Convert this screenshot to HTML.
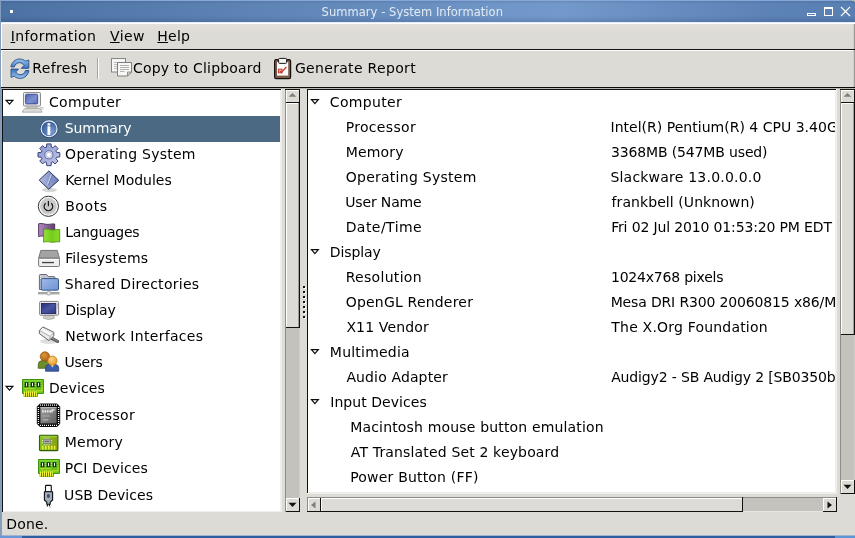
<!DOCTYPE html>
<html><head><meta charset="utf-8"><title>Summary - System Information</title>
<style>
html,body{margin:0;padding:0;}
body{width:855px;height:538px;position:relative;overflow:hidden;background:#dddbd6;font-family:"DejaVu Sans","Liberation Sans",sans-serif;font-size:14px;color:#000;}
#w{position:absolute;left:0;top:0;width:855px;height:538px;overflow:hidden;will-change:transform;}
.a{position:absolute;}
.t{position:absolute;white-space:nowrap;line-height:17px;height:17px;}
#title{left:0;top:0;width:855px;height:22px;background:linear-gradient(180deg,rgba(20,40,80,.16) 0,rgba(20,40,80,0) 4px,rgba(20,40,80,0) 16px,rgba(20,40,80,.17) 22px),linear-gradient(90deg,#4c71a3 0%,#557aac 15%,#5e84b6 30%,#678dbf 45%,#7096c7 58%,#7399ca 66%,#678dc0 78%,#5c82b6 90%,#5980b3 100%);}
.tree{background:#fff;overflow:hidden;}
.sel{background:#4b6983;}
svg{position:absolute;overflow:visible;}
u{text-decoration:underline;text-decoration-thickness:1px;text-underline-offset:0.5px;}
</style></head><body><div id="w">
<div id="title" class="a"><div class="a" style="left:0;top:0;width:855px;height:1px;background:#86a8d6"></div></div>
<div class="t" style="left:321.54px;top:4.3px;letter-spacing:0.047px;color:#e2eaf4;font-size:11.5px;">Summary - System Information</div>
<div class="a" style="left:10px;top:10px;width:3px;height:3px;background:#fff;"></div>
<svg style="left:800px;top:0" width="55" height="23" viewBox="800 0 55 23">
<rect x="807.5" y="13.5" width="8" height="2" fill="none" stroke="#fff" stroke-width="1"/>
<rect x="824.5" y="7.5" width="8" height="8" fill="none" stroke="#fff" stroke-width="1"/><rect x="824" y="7" width="9" height="2" fill="#fff"/>
<path d="M841 7 L850 16 M850 7 L841 16" stroke="#fff" stroke-width="1.1" fill="none"/>
</svg>
<div class="a" style="left:1px;top:22px;width:854px;height:1px;background:#e6edf6;"></div>
<div class="a" style="left:1px;top:23px;width:854px;height:1px;background:#fff;"></div>
<div class="a" style="left:1px;top:24px;width:854px;height:25px;background:#dddbd6;background:linear-gradient(180deg,#e4e0da 0,#dddbd6 9px);"></div>
<div class="t" style="left:10.63px;top:28px;letter-spacing:0.432px;"><u>I</u>nformation</div>
<div class="t" style="left:109.99px;top:28px;letter-spacing:0.388px;"><u>V</u>iew</div>
<div class="t" style="left:157.33px;top:28px;letter-spacing:0.206px;"><u>H</u>elp</div>
<div class="a" style="left:1px;top:49px;width:854px;height:1px;background:#111;"></div>
<div class="a" style="left:1px;top:50px;width:854px;height:1px;background:#fff;"></div>
<div class="a" style="left:1px;top:51px;width:854px;height:36px;background:#dddbd6;"></div>
<div class="a" style="left:1px;top:24px;width:1px;height:63px;background:#fff;"></div>
<div class="t" style="left:32.23px;top:60px;letter-spacing:0.348px;">Refresh</div>
<div class="a" style="left:97px;top:58px;width:1px;height:21px;background:#a5a39e;"></div>
<div class="a" style="left:98px;top:58px;width:1px;height:21px;background:#fff;"></div>
<div class="t" style="left:132.91px;top:60px;letter-spacing:0.201px;">Copy to Clipboard</div>
<div class="t" style="left:294.91px;top:60px;letter-spacing:0.319px;">Generate Report</div>
<div class="a" style="left:853px;top:24px;width:1px;height:63px;background:#d0cec9;"></div>
<div class="a" style="left:854px;top:24px;width:1px;height:63px;background:#9c9a95;"></div>
<div class="a" style="left:1px;top:49px;width:854px;height:1px;background:#111;"></div>
<div class="a" style="left:1px;top:87px;width:854px;height:1px;background:#0a0a0a;"></div>
<div class="a" style="left:2px;top:88px;width:853px;height:1px;background:#b9b7b2;"></div>
<div class="a" style="left:2px;top:89px;width:280px;height:423px;background:#fff;"></div>
<div class="a" style="left:2px;top:89px;width:279px;height:1px;background:#111;"></div>
<div class="a" style="left:2px;top:89px;width:1px;height:423px;background:#111;"></div>
<div class="a" style="left:280px;top:90px;width:2px;height:422px;background:#efeeeb;"></div>
<div class="a" style="left:3px;top:511px;width:279px;height:1px;background:#efeeeb;"></div>
<div class="a tree" style="left:3px;top:90px;width:277px;height:421px;">
<div class="a sel" style="left:0;top:26px;width:277px;height:26px"></div>
<div class="t" style="left:46.01px;top:4px;letter-spacing:0.325px;">Computer</div>
<div class="t" style="left:61.78px;top:30px;letter-spacing:-0.136px;color:#fff;">Summary</div>
<div class="t" style="left:62.11px;top:56px;letter-spacing:0.248px;">Operating System</div>
<div class="t" style="left:62.13px;top:82px;letter-spacing:0.001px;">Kernel Modules</div>
<div class="t" style="left:62.13px;top:108px;letter-spacing:0.607px;">Boots</div>
<div class="t" style="left:62.23px;top:134px;letter-spacing:-0.242px;">Languages</div>
<div class="t" style="left:62.13px;top:160px;letter-spacing:0.161px;">Filesystems</div>
<div class="t" style="left:61.78px;top:186px;letter-spacing:0.266px;">Shared Directories</div>
<div class="t" style="left:62.13px;top:212px;letter-spacing:-0.170px;">Display</div>
<div class="t" style="left:62.13px;top:238px;letter-spacing:0.292px;">Network Interfaces</div>
<div class="t" style="left:61.48px;top:264px;letter-spacing:-0.205px;">Users</div>
<div class="t" style="left:45.93px;top:290px;letter-spacing:0.128px;">Devices</div>
<div class="t" style="left:61.83px;top:317px;letter-spacing:0.305px;">Processor</div>
<div class="t" style="left:61.83px;top:344px;letter-spacing:0.191px;">Memory</div>
<div class="t" style="left:61.83px;top:370px;letter-spacing:0.097px;">PCI Devices</div>
<div class="t" style="left:61.08px;top:397px;letter-spacing:0.053px;">USB Devices</div>
</div>
<div class="a" style="left:285px;top:89px;width:15px;height:423px;background:#c4c2bc;"></div>
<div class="a" style="left:285px;top:89px;width:1px;height:423px;background:#8f8d88;"></div>
<div class="a" style="left:285px;top:89px;width:15px;height:1px;background:#111;"></div>
<div class="a" style="left:299px;top:89px;width:1px;height:423px;background:#111;"></div>
<div class="a" style="left:286px;top:90px;width:13px;height:12px;background:#dddbd6;"></div>
<div class="a" style="left:286px;top:90px;width:13px;height:1px;background:#fff;"></div>
<div class="a" style="left:286px;top:90px;width:1px;height:12px;background:#fff;"></div>
<div class="a" style="left:286px;top:102px;width:14px;height:1px;background:#111;"></div>
<div class="a" style="left:286px;top:103px;width:13px;height:224px;background:#dddbd6;"></div>
<div class="a" style="left:286px;top:103px;width:1px;height:224px;background:#fff;"></div>
<div class="a" style="left:286px;top:103px;width:13px;height:1px;background:#fff;"></div>
<div class="a" style="left:286px;top:327px;width:14px;height:1px;background:#111;"></div>
<div class="a" style="left:298px;top:103px;width:1px;height:224px;background:#a09e99;"></div>
<div class="a" style="left:299px;top:328px;width:1px;height:184px;background:#d0cec8;"></div>
<div class="a" style="left:286px;top:498px;width:13px;height:13px;background:#dddbd6;"></div>
<div class="a" style="left:286px;top:498px;width:13px;height:1px;background:#fff;"></div>
<div class="a" style="left:286px;top:498px;width:1px;height:13px;background:#fff;"></div>
<div class="a" style="left:299px;top:498px;width:1px;height:14px;background:#111;"></div>
<div class="a" style="left:286px;top:511px;width:14px;height:1px;background:#111;"></div>
<svg style="left:0;top:0" width="855" height="538"><path d="M292.5 507 l4 -4.2 l-8 0z" fill="#111"/><path d="M292.5 93 l3.8 3.8 l-7.6 0z" fill="#807e7a"/></svg>
<div class="a" style="left:840px;top:89px;width:15px;height:405px;background:#c4c2bc;"></div>
<div class="a" style="left:840px;top:89px;width:1px;height:405px;background:#8f8d88;"></div>
<div class="a" style="left:840px;top:89px;width:15px;height:1px;background:#111;"></div>
<div class="a" style="left:854px;top:89px;width:1px;height:405px;background:#111;"></div>
<div class="a" style="left:841px;top:90px;width:13px;height:12px;background:#dddbd6;"></div>
<div class="a" style="left:841px;top:90px;width:13px;height:1px;background:#fff;"></div>
<div class="a" style="left:841px;top:90px;width:1px;height:12px;background:#fff;"></div>
<div class="a" style="left:841px;top:102px;width:14px;height:1px;background:#111;"></div>
<div class="a" style="left:841px;top:103px;width:13px;height:231px;background:#dddbd6;"></div>
<div class="a" style="left:841px;top:103px;width:1px;height:231px;background:#fff;"></div>
<div class="a" style="left:841px;top:103px;width:13px;height:1px;background:#fff;"></div>
<div class="a" style="left:841px;top:334px;width:14px;height:1px;background:#111;"></div>
<div class="a" style="left:853px;top:103px;width:1px;height:231px;background:#a09e99;"></div>
<div class="a" style="left:854px;top:335px;width:1px;height:159px;background:#d0cec8;"></div>
<div class="a" style="left:841px;top:480px;width:13px;height:13px;background:#dddbd6;"></div>
<div class="a" style="left:841px;top:480px;width:13px;height:1px;background:#fff;"></div>
<div class="a" style="left:841px;top:480px;width:1px;height:13px;background:#fff;"></div>
<div class="a" style="left:854px;top:480px;width:1px;height:14px;background:#111;"></div>
<div class="a" style="left:841px;top:493px;width:14px;height:1px;background:#111;"></div>
<svg style="left:0;top:0" width="855" height="538"><path d="M847.5 489 l4 -4.2 l-8 0z" fill="#111"/><path d="M847.5 93 l3.8 3.8 l-7.6 0z" fill="#807e7a"/></svg>
<div class="a" style="left:304px;top:287px;width:2px;height:2px;background:#fff;"></div>
<div class="a" style="left:303px;top:286px;width:2px;height:2px;background:#111;"></div>
<div class="a" style="left:304px;top:292px;width:2px;height:2px;background:#fff;"></div>
<div class="a" style="left:303px;top:291px;width:2px;height:2px;background:#111;"></div>
<div class="a" style="left:304px;top:297px;width:2px;height:2px;background:#fff;"></div>
<div class="a" style="left:303px;top:296px;width:2px;height:2px;background:#111;"></div>
<div class="a" style="left:304px;top:302px;width:2px;height:2px;background:#fff;"></div>
<div class="a" style="left:303px;top:301px;width:2px;height:2px;background:#111;"></div>
<div class="a" style="left:304px;top:307px;width:2px;height:2px;background:#fff;"></div>
<div class="a" style="left:303px;top:306px;width:2px;height:2px;background:#111;"></div>
<div class="a" style="left:304px;top:312px;width:2px;height:2px;background:#fff;"></div>
<div class="a" style="left:303px;top:311px;width:2px;height:2px;background:#111;"></div>
<div class="a" style="left:304px;top:317px;width:2px;height:2px;background:#fff;"></div>
<div class="a" style="left:303px;top:316px;width:2px;height:2px;background:#111;"></div>
<div class="a" style="left:307px;top:89px;width:530px;height:405px;background:#fff;"></div>
<div class="a" style="left:307px;top:89px;width:529px;height:1px;background:#111;"></div>
<div class="a" style="left:307px;top:89px;width:1px;height:404px;background:#111;"></div>
<div class="a" style="left:835px;top:90px;width:2px;height:404px;background:#efeeeb;"></div>
<div class="a" style="left:308px;top:492px;width:529px;height:2px;background:#efeeeb;"></div>
<div class="a tree" style="left:308px;top:90px;width:527px;height:402px;">
<div class="t" style="left:21.81px;top:4px;letter-spacing:0.325px;">Computer</div>
<div class="t" style="left:37.63px;top:29px;letter-spacing:0.330px;">Processor</div>
<div class="t" style="left:302.53px;top:29px;letter-spacing:0.015px;">Intel(R) Pentium(R) 4 CPU 3.40GHz</div>
<div class="t" style="left:37.63px;top:54px;letter-spacing:0.191px;">Memory</div>
<div class="t" style="left:302.93px;top:54px;letter-spacing:-0.142px;">3368MB (547MB used)</div>
<div class="t" style="left:37.71px;top:79px;letter-spacing:0.261px;">Operating System</div>
<div class="t" style="left:302.38px;top:79px;letter-spacing:0.216px;">Slackware 13.0.0.0.0</div>
<div class="t" style="left:37.28px;top:104px;letter-spacing:-0.151px;">User Name</div>
<div class="t" style="left:303.58px;top:104px;letter-spacing:0.074px;">frankbell (Unknown)</div>
<div class="t" style="left:37.63px;top:129px;letter-spacing:0.458px;">Date/Time</div>
<div class="t" style="left:303.13px;top:129px;letter-spacing:-0.149px;">Fri 02 Jul 2010 01:53:20 PM EDT</div>
<div class="t" style="left:21.83px;top:154px;letter-spacing:-0.120px;">Display</div>
<div class="t" style="left:37.63px;top:179px;letter-spacing:0.312px;">Resolution</div>
<div class="t" style="left:302.96px;top:179px;letter-spacing:-0.207px;">1024x768 pixels</div>
<div class="t" style="left:37.71px;top:204px;letter-spacing:0.199px;">OpenGL Renderer</div>
<div class="t" style="left:302.63px;top:204px;letter-spacing:-0.148px;">Mesa DRI R300 20060815 x86/MMX/SSE2 TCL</div>
<div class="t" style="left:38.38px;top:229px;letter-spacing:0.152px;">X11 Vendor</div>
<div class="t" style="left:303.34px;top:229px;letter-spacing:0.195px;">The X.Org Foundation</div>
<div class="t" style="left:21.83px;top:254px;letter-spacing:0.224px;">Multimedia</div>
<div class="t" style="left:38.39px;top:279px;letter-spacing:0.134px;">Audio Adapter</div>
<div class="t" style="left:303.19px;top:279px;letter-spacing:-0.152px;">Audigy2 - SB Audigy 2 [SB0350b]</div>
<div class="t" style="left:22.23px;top:304px;letter-spacing:0.049px;">Input Devices</div>
<div class="t" style="left:42.23px;top:329px;letter-spacing:0.168px;">Macintosh mouse button emulation</div>
<div class="t" style="left:42.79px;top:354px;letter-spacing:0.157px;">AT Translated Set 2 keyboard</div>
<div class="t" style="left:42.23px;top:379px;letter-spacing:0.189px;">Power Button (FF)</div>
</div>
<div class="a" style="left:307px;top:497px;width:530px;height:15px;background:#c4c2bc;"></div>
<div class="a" style="left:307px;top:497px;width:530px;height:1px;background:#8f8d88;"></div>
<div class="a" style="left:307px;top:497px;width:1px;height:15px;background:#8f8d88;"></div>
<div class="a" style="left:307px;top:511px;width:530px;height:1px;background:#111;"></div>
<div class="a" style="left:308px;top:498px;width:12px;height:13px;background:#dddbd6;"></div>
<div class="a" style="left:308px;top:498px;width:12px;height:1px;background:#fff;"></div>
<div class="a" style="left:308px;top:498px;width:1px;height:13px;background:#fff;"></div>
<div class="a" style="left:320px;top:498px;width:1px;height:14px;background:#111;"></div>
<div class="a" style="left:321px;top:498px;width:421px;height:13px;background:#dddbd6;"></div>
<div class="a" style="left:321px;top:498px;width:421px;height:1px;background:#fff;"></div>
<div class="a" style="left:321px;top:498px;width:1px;height:13px;background:#fff;"></div>
<div class="a" style="left:742px;top:497px;width:1px;height:15px;background:#111;"></div>
<div class="a" style="left:743px;top:511px;width:80px;height:1px;background:#e8e6e2;"></div>
<div class="a" style="left:823px;top:498px;width:13px;height:13px;background:#dddbd6;"></div>
<div class="a" style="left:823px;top:498px;width:13px;height:1px;background:#fff;"></div>
<div class="a" style="left:823px;top:498px;width:1px;height:13px;background:#fff;"></div>
<div class="a" style="left:836px;top:497px;width:1px;height:15px;background:#111;"></div>
<div class="a" style="left:823px;top:511px;width:14px;height:1px;background:#111;"></div>
<svg style="left:0;top:0" width="855" height="538"><path d="M311 505 l4.5 -3.5 l0 7z" fill="#807e7a"/><path d="M832 505 l-4.5 -3.5 l0 7z" fill="#111"/></svg>
<svg style="left:0;top:0" width="855" height="538"><path d="M6.1 100.3 h6.8 l-3.4 3.9z" fill="#fff" stroke="#0c0c0c" stroke-width="1.2" stroke-linejoin="miter"/></svg>
<svg style="left:0;top:0" width="855" height="538"><path d="M6.1 386.3 h6.8 l-3.4 3.9z" fill="#fff" stroke="#0c0c0c" stroke-width="1.2" stroke-linejoin="miter"/></svg>
<svg style="left:0;top:0" width="855" height="538"><path d="M311.5 99.7 h6.8 l-3.4 3.9z" fill="#fff" stroke="#0c0c0c" stroke-width="1.2" stroke-linejoin="miter"/></svg>
<svg style="left:0;top:0" width="855" height="538"><path d="M311.5 249.7 h6.8 l-3.4 3.9z" fill="#fff" stroke="#0c0c0c" stroke-width="1.2" stroke-linejoin="miter"/></svg>
<svg style="left:0;top:0" width="855" height="538"><path d="M311.5 349.7 h6.8 l-3.4 3.9z" fill="#fff" stroke="#0c0c0c" stroke-width="1.2" stroke-linejoin="miter"/></svg>
<svg style="left:0;top:0" width="855" height="538"><path d="M311.5 399.7 h6.8 l-3.4 3.9z" fill="#fff" stroke="#0c0c0c" stroke-width="1.2" stroke-linejoin="miter"/></svg>
<div class="t" style="left:6.23px;top:516px;letter-spacing:0.172px;">Done.</div>
<div class="a" style="left:0px;top:535px;width:855px;height:1px;background:#a3b4cc;"></div>
<div class="a" style="left:0px;top:536px;width:855px;height:2px;background:#2e5e9f;"></div>
<div class="a" style="left:0px;top:536px;width:22px;height:2px;background:#6797d6;"></div>
<div class="a" style="left:835px;top:536px;width:20px;height:2px;background:#5c96d6;"></div>
<div class="a" style="left:0px;top:0px;width:2px;height:1px;background:#a4ab98;"></div>
<div class="a" style="left:0px;top:1px;width:1px;height:1px;background:#97a5a6;"></div>
<div class="a" style="left:852px;top:0px;width:3px;height:1px;background:#b4c4a4;"></div>
<div class="a" style="left:854px;top:1px;width:1px;height:1px;background:#9fb8c0;"></div>
<div class="a" style="left:0px;top:0px;width:1px;height:536px;background:#869cbc;"></div>
<div class="a" style="left:1px;top:88px;width:1px;height:448px;background:#8e9fb6;"></div>
<svg style="left:0;top:0" width="855" height="538" viewBox="0 0 855 538">
<defs>
<linearGradient id="gRef" x1="0" y1="0" x2="0" y2="1"><stop offset="0" stop-color="#9cc6f0"/><stop offset="1" stop-color="#3b73bb"/></linearGradient>
<linearGradient id="gScr" x1="0" y1="0" x2="1" y2="1"><stop offset="0" stop-color="#4f63ad"/><stop offset="0.55" stop-color="#7d90d2"/><stop offset="1" stop-color="#5a6db8"/></linearGradient>
<radialGradient id="gInfo" cx="0.65" cy="0.7" r="0.8"><stop offset="0" stop-color="#7d9dd2"/><stop offset="1" stop-color="#2e528f"/></radialGradient>
<linearGradient id="gGear" x1="0" y1="0" x2="1" y2="1"><stop offset="0" stop-color="#8896cc"/><stop offset="1" stop-color="#c6c8ea"/></linearGradient>
<linearGradient id="gDia" x1="0" y1="0" x2="1" y2="0"><stop offset="0" stop-color="#b4bee2"/><stop offset="1" stop-color="#6a7cbc"/></linearGradient>
<linearGradient id="gPur" x1="0" y1="0" x2="1" y2="0"><stop offset="0" stop-color="#b58bc2"/><stop offset="1" stop-color="#5e3d6e"/></linearGradient>
<linearGradient id="gGrn" x1="0" y1="0" x2="1" y2="0"><stop offset="0" stop-color="#96e040"/><stop offset="0.5" stop-color="#74cc18"/><stop offset="1" stop-color="#8ada30"/></linearGradient>
<linearGradient id="gFold" x1="0" y1="0" x2="1" y2="1"><stop offset="0" stop-color="#9ebaea"/><stop offset="1" stop-color="#6f92d4"/></linearGradient>
<linearGradient id="gDisp" x1="0" y1="0" x2="1" y2="1"><stop offset="0" stop-color="#232c78"/><stop offset="0.5" stop-color="#4a55a0"/><stop offset="1" stop-color="#2c3684"/></linearGradient>
<radialGradient id="gH1" cx="0.4" cy="0.35" r="0.7"><stop offset="0" stop-color="#e0963a"/><stop offset="1" stop-color="#a8600e"/></radialGradient>
<radialGradient id="gH2" cx="0.4" cy="0.35" r="0.7"><stop offset="0" stop-color="#fad28a"/><stop offset="1" stop-color="#e8961e"/></radialGradient>
<linearGradient id="gChip" x1="0" y1="0" x2="1" y2="1"><stop offset="0" stop-color="#a4a4a4"/><stop offset="1" stop-color="#5e5e5e"/></linearGradient>
<linearGradient id="gMem" x1="0" y1="0" x2="1" y2="0"><stop offset="0" stop-color="#86c424"/><stop offset="1" stop-color="#8a9e18"/></linearGradient>
<g id="card">
<path d="M0.5 0.5 h21 v14 h-6.2 v3 h-13 v-3 h-1.8z" fill="#66c41c" stroke="#3a960a" stroke-width="1"/>
<rect x="1.4" y="1.4" width="19.2" height="1" fill="#92e04a"/>
<rect x="2.6" y="3.2" width="3.8" height="5" fill="#14301a"/><rect x="8.6" y="3.2" width="3.8" height="5" fill="#14301a"/><rect x="14.6" y="3.2" width="3.8" height="5" fill="#14301a"/>
<rect x="4" y="4" width="1" height="3.2" fill="#eef4ee"/><rect x="10" y="4" width="1" height="3.2" fill="#eef4ee"/><rect x="16" y="4" width="1" height="3.2" fill="#eef4ee"/>
<path d="M6.8 4.5 h1.4 M6.8 6.5 h1.4 M12.8 4.5 h1.4 M12.8 6.5 h1.4 M1.6 4.5 h0.8 M1.6 6.5 h0.8 M18.6 4.5 h1 M18.6 6.5 h1" stroke="#d8e4a0" stroke-width="0.7"/>
<path d="M2.6 9.4 h10 M2.6 9.6 l2.8 2.4 M5.4 11.9 h14.8 v-4.2" stroke="#cfe024" stroke-width="0.9" fill="none"/>
<rect x="1.8" y="14" width="13" height="3.6" fill="#6e7a0c"/>
<path d="M2.5 12.4 v5.2 M4.5 12.4 v5.2 M6.5 12.4 v5.2 M8.5 12.4 v5.2 M10.5 12.4 v5.2 M12.5 12.4 v5.2 M14.3 12.4 v5.2" stroke="#f4f43c" stroke-width="1"/>
</g>
</defs>
<!-- refresh -->
<g transform="translate(10,58.3)">
<path id="rf" d="M0.9 8.6 C1.5 4.4 5 0.7 9.6 0.7 C12 0.7 13.9 1.5 15.4 2.8 L18.8 1.8 L18.8 10 L11.3 10 L14 7.2 C13 5.5 11.5 4.4 9.6 4.4 C7 4.4 5.1 6 4.3 8.6 Z" fill="url(#gRef)" stroke="#244c86" stroke-width="0.9" stroke-linejoin="round"/>
<use href="#rf" transform="rotate(180 9.9 10.4)"/>
</g>
<!-- copy -->
<g>
<rect x="111.5" y="58.5" width="14" height="13.5" fill="#f6f6f5" stroke="#868684" stroke-width="1"/>
<path d="M114 62.5 h8 M114 64.5 h9 M114 66.5 h8 M114 68.5 h5" stroke="#b5b5b3" stroke-width="0.9"/>
<path d="M117.5 62.5 h14 v9.5 l-4 4 h-10z" fill="#f7f7f6" stroke="#7e7e7c" stroke-width="1"/>
<path d="M131.5 72 h-4 v4z" fill="#d0d0ce" stroke="#7e7e7c" stroke-width="0.8"/>
<path d="M120 65.5 h9 M120 67.5 h9 M120 69.5 h9 M120 71.5 h4.5" stroke="#a9a9a7" stroke-width="0.9"/>
</g>
<!-- clipboard -->
<g>
<rect x="274.6" y="59.6" width="16" height="19" rx="1.6" fill="#7b5a47" stroke="#141210" stroke-width="1.2"/>
<rect x="277" y="62" width="11.2" height="13.6" fill="#fbfbfa"/>
<rect x="278.6" y="58.4" width="8" height="5" rx="1" fill="#f4f4f2" stroke="#1a1a18" stroke-width="1"/>
<rect x="278.4" y="69.2" width="3.6" height="3.6" fill="#f2dcd8" stroke="#c23a2c" stroke-width="1"/>
<path d="M279.6 70.6 l1.6 2 l5.2 -5.6" stroke="#cc3426" stroke-width="1.3" fill="none"/>
</g>
<!-- computer -->
<g>
<rect x="23.5" y="92.5" width="17" height="13.6" rx="1" fill="#e9e9ef" stroke="#8c8c8c" stroke-width="1"/>
<rect x="25.6" y="94.3" width="12" height="9.6" rx="1" fill="url(#gScr)" stroke="#39488a" stroke-width="0.9"/>
<rect x="27" y="106.2" width="10" height="1.8" fill="#d4d4cf" stroke="#9a9a96" stroke-width="0.5"/>
<path d="M25 108.3 h14.5 l2.6 3.8 h-19.8z" fill="#efefec" stroke="#9c9c98" stroke-width="0.9"/>
<path d="M25.5 109.6 h13.6 M24.6 110.8 h15.4" stroke="#c4c4c0" stroke-width="0.6"/>
<ellipse cx="41.5" cy="108.3" rx="1.7" ry="1.1" fill="#e4e4e0" stroke="#a2a29e" stroke-width="0.5"/>
</g>
<!-- info -->
<g>
<circle cx="49.1" cy="128.8" r="9.3" fill="#2f4f80"/>
<circle cx="49.1" cy="128.8" r="8.5" fill="#f4f7fb"/>
<circle cx="49.1" cy="128.8" r="7.4" fill="url(#gInfo)"/>
<rect x="47.5" y="123.2" width="2.8" height="2.3" fill="#fff"/>
<rect x="47.5" y="126.3" width="2.8" height="8.7" fill="#fff"/>
</g>
<!-- gear -->
<g transform="translate(48.9,154.8)">
<path id="gear" d="" />
<g fill="url(#gGear)" stroke="#35437c" stroke-width="1" stroke-linejoin="round">
<path d="M-2.1 -10.9 L2.1 -10.9 L2.5 -7.6 L4.0 -7.0 L6.2 -9.2 L9.2 -6.2 L7.0 -4.0 L7.6 -2.5 L10.9 -2.1 L10.9 2.1 L7.6 2.5 L7.0 4.0 L9.2 6.2 L6.2 9.2 L4.0 7.0 L2.5 7.6 L2.1 10.9 L-2.1 10.9 L-2.5 7.6 L-4.0 7.0 L-6.2 9.2 L-9.2 6.2 L-7.0 4.0 L-7.6 2.5 L-10.9 2.1 L-10.9 -2.1 L-7.6 -2.5 L-7.0 -4.0 L-9.2 -6.2 L-6.2 -9.2 L-4.0 -7.0 L-2.5 -7.6 Z"/>
</g>
<circle r="4.1" fill="#e3e4f3" stroke="#56629c" stroke-width="0.9"/>
<circle r="2.5" fill="#fff" stroke="#8a92bc" stroke-width="0.5"/>
</g>
<!-- kernel -->
<g>
<ellipse cx="49.5" cy="190" rx="7.5" ry="2.2" fill="#000" opacity="0.16"/>
<path d="M39.2 180.2 L48.8 171 L58.7 180.2 L48.8 189.3 Z" fill="url(#gDia)" stroke="#2b3152" stroke-width="1" stroke-linejoin="round"/>
<path d="M51.5 174.5 L47.5 184.5" stroke="#eef0fa" stroke-width="0.9" opacity="0.8"/>
<path d="M52.5 175 L48.5 185" stroke="#5a6698" stroke-width="0.8" opacity="0.7"/>
</g>
<!-- boots -->
<g>
<circle cx="48.4" cy="206.3" r="10.1" fill="#f6f6f6" stroke="#333" stroke-width="1"/>
<circle cx="48.4" cy="206.3" r="8.3" fill="#c9c9c9"/>
<path d="M45.6 203.2 A4.3 4.3 0 1 0 51.2 203.2" fill="none" stroke="#161616" stroke-width="1.2"/>
<path d="M48.4 201 V206.2" stroke="#161616" stroke-width="1.2"/>
</g>
<!-- languages -->
<g>
<path d="M38.6 223.8 C42 222.6 45 224.6 48 224.4 C50.5 224.3 52.5 223.6 54.7 224 L54.7 236.4 C52 235.6 50 236.8 47 236.6 C44 236.4 41.5 235.4 38.6 236.6 Z" fill="url(#gPur)" stroke="#4a2d58" stroke-width="0.9"/>
<path d="M43.6 229.4 C47 228.2 50 230.2 53 230 C55.5 229.9 57.5 229.2 59.7 229.6 L59.7 242 C57 241.2 55 242.4 52 242.2 C49 242 46.5 241 43.6 242.2 Z" fill="url(#gGrn)" stroke="#4f9410" stroke-width="0.9"/>
</g>
<!-- filesystems -->
<g>
<path d="M40.8 250.4 H57.3 L59.5 258.4 H38.6 Z" fill="#a3a3a3" stroke="#6c6c6c" stroke-width="0.9" stroke-linejoin="round"/>
<rect x="38.6" y="258.2" width="20.9" height="8.3" rx="1.2" fill="#eeeeee" stroke="#6a6a6a" stroke-width="0.9"/>
<rect x="39.6" y="259.1" width="18.9" height="1" fill="#fff"/>
<rect x="42" y="261.9" width="12" height="1.3" fill="#444"/>
</g>
<!-- shared folder -->
<g>
<path d="M39.4 289.5 V275.4 Q39.4 274.5 40.3 274.5 H46.5 L48.3 276.6 H54.2 Q54.9 276.6 54.9 277.4 V289.5 Z" fill="#c3c7cc" stroke="#55606c" stroke-width="0.9"/>
<path d="M40.6 276 V289" stroke="#f0f2f4" stroke-width="0.8" stroke-dasharray="1 1"/>
<rect x="41.2" y="278.6" width="17.3" height="11.6" rx="1" fill="url(#gFold)" stroke="#2c4c7e" stroke-width="0.9"/>
<path d="M38 293 H59.5" stroke="#666" stroke-width="1.2"/>
<path d="M38 294.2 H59.5" stroke="#bbb" stroke-width="0.8"/>
<circle cx="48.9" cy="293.2" r="2" fill="#e2e2e2" stroke="#8a8a8a" stroke-width="0.6"/>
</g>
<!-- display -->
<g>
<path d="M44.2 315.5 H53.8 L54.6 318.2 Q49 321 43.4 318.2 Z" fill="#cfcfc8" stroke="#9a9a94" stroke-width="0.6"/>
<rect x="39.6" y="301.4" width="19" height="13.8" rx="1.2" fill="#e9e9f1" stroke="#787878" stroke-width="0.9"/>
<rect x="41.4" y="303.4" width="14.4" height="10.2" fill="url(#gDisp)" stroke="#1b2152" stroke-width="0.8"/>
<path d="M56.8 304.5 h1.2 M56.8 306.3 h1.2 M56.8 308.1 h1.2" stroke="#9ea0a8" stroke-width="0.7"/>
</g>
<!-- network -->
<g>
<ellipse cx="49" cy="341.3" rx="9" ry="2.6" fill="#000" opacity="0.13"/>
<path d="M50.5 337.8 L57.6 341.4" stroke="#5a5a5a" stroke-width="3.2" stroke-linecap="round"/>
<path d="M50.5 337.4 L57.6 341" stroke="#8c8c8c" stroke-width="1.1" stroke-linecap="round"/>
<path d="M39.4 330.4 L42.9 326.9 L53.8 332.3 L53.8 335.8 L49 340.7 L39.4 333.6 Z" fill="#ececec" stroke="#555" stroke-width="0.9" stroke-linejoin="round"/>
<path d="M39.4 330.4 L50.2 336.6 L53.8 332.3 M50.2 336.6 L49 340.7" stroke="#9a9a9a" stroke-width="0.7" fill="none"/>
<path d="M41.5 329.6 L51 334.6" stroke="#fff" stroke-width="1.4"/>
</g>
<!-- users -->
<g>
<path d="M38.2 368.3 V364.8 Q38.2 361 42 360.6 H47.8 Q51 361 51 364.8 V368.3 Z" fill="#6d8c2c" stroke="#4a641c" stroke-width="0.8"/>
<circle cx="44.9" cy="356.5" r="4.7" fill="url(#gH1)" stroke="#8a4e0c" stroke-width="0.7"/>
<path d="M45.6 371.2 V368 Q45.6 364.6 49.4 364.4 H55 Q58.7 364.6 58.7 368 V371.2 Z" fill="#3c5ea6" stroke="#263f7c" stroke-width="0.8"/>
<path d="M50.4 364.6 L52.3 367.6 L54.2 364.6 Z" fill="#f4f6fa"/>
<circle cx="52.4" cy="360.7" r="4.7" fill="url(#gH2)" stroke="#c47a18" stroke-width="0.7"/>
</g>
<!-- devices & pci -->
<use href="#card" x="22" y="379"/>
<use href="#card" x="38" y="459"/>
<!-- processor -->
<g>
<path d="M40 403.6 H57 L60.2 406.8 V423.8 L57 427 H40 L36.8 423.8 V406.8 Z" fill="#0c0c0c"/>
<path d="M40 405.2 H57" stroke="#fff" stroke-width="1.3" stroke-dasharray="1 1"/>
<path d="M40 425.4 H57" stroke="#fff" stroke-width="1.3" stroke-dasharray="1 1"/>
<path d="M38.4 407 V424" stroke="#fff" stroke-width="1.3" stroke-dasharray="1 1"/>
<path d="M58.6 407 V424" stroke="#fff" stroke-width="1.3" stroke-dasharray="1 1"/>
<rect x="40.4" y="407.2" width="16.2" height="16.2" fill="url(#gChip)"/>
<rect x="40.4" y="407.2" width="16.2" height="0.9" fill="#c4c4c4"/>
<path d="M42.2 411.3 h1.5 M44.5 411.3 h1.5 M46.8 411.3 h1.8 M49.4 411.3 h1.8" stroke="#ececec" stroke-width="2.2" fill="none"/>
<path d="M52 412.4 v-2.6 h2.6" stroke="#f2f2f2" stroke-width="1.2" fill="none"/>
<path d="M43 416 h7" stroke="#b2b2b2" stroke-width="0.9"/>
<path d="M43 419.8 h5.4" stroke="#a6a6a6" stroke-width="1.8"/>
</g>
<!-- memory -->
<g>
<rect x="39.5" y="435.2" width="18.4" height="15.4" rx="0.8" fill="url(#gMem)" stroke="#2f610c" stroke-width="1.1"/>
<rect x="40.6" y="436.3" width="16.2" height="0.9" fill="#a4da48"/>
<rect x="43.6" y="439.2" width="7" height="4.6" rx="1" fill="#a9a9a9" stroke="#6a6a6a" stroke-width="0.6"/>
<rect x="45" y="440.9" width="4" height="1" fill="#666"/>
<path d="M44.2 438.2 h6" stroke="#f4f8e4" stroke-width="0.9" stroke-dasharray="1 1.2"/>
<path d="M44.2 444.8 h6" stroke="#f4f8e4" stroke-width="0.9" stroke-dasharray="1 1.2"/>
<path d="M42.6 440 v3.4 M51.6 440 v3.4" stroke="#f4f8e4" stroke-width="0.9" stroke-dasharray="1 1.2"/>
<path d="M42.8 445.8 v3.8 M45.8 445.8 v3.8 M48.8 445.8 v3.8 M51.8 445.8 v3.8 M54.6 445.8 v3.8" stroke="#f2ee2e" stroke-width="1.5"/>
</g>
<!-- usb -->
<g>
<rect x="45.5" y="485.4" width="5.8" height="6.4" rx="0.8" fill="#f8f8f8" stroke="#0e0e0e" stroke-width="1.1"/>
<path d="M44.4 491.8 H52.6 V500 L50.2 502.2 V504.2 H46.8 V502.2 L44.4 500 Z" fill="#9fadbd" stroke="#0e0e0e" stroke-width="1.1" stroke-linejoin="round"/>
<ellipse cx="48.4" cy="496" rx="1.5" ry="1.9" fill="#3d4c62"/>
<path d="M47.4 504.2 V506.6 M49.4 504.2 V506" stroke="#0e0e0e" stroke-width="1.1"/>
<path d="M49.2 506.6 L50.6 507.2" stroke="#8d8d8d" stroke-width="1.2"/>
</g>
</svg>

</div></body></html>
